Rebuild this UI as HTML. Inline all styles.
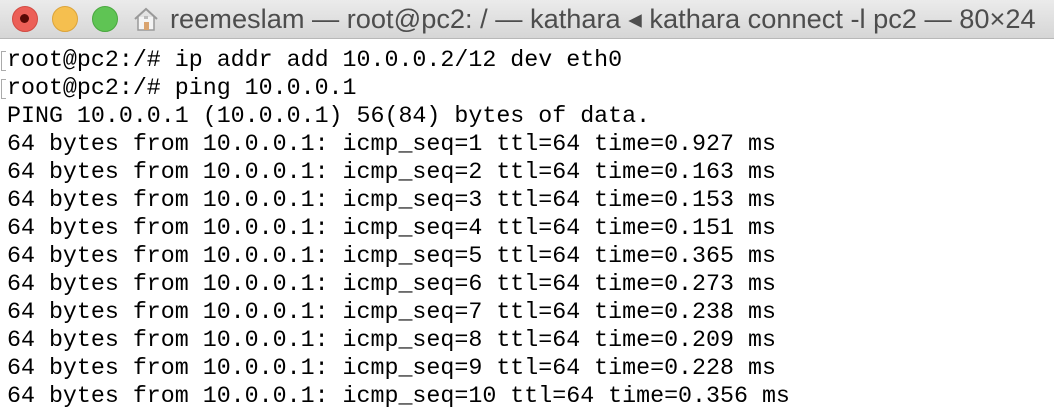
<!DOCTYPE html>
<html><head><style>
body{margin:0;width:1054px;height:410px;overflow:hidden;background:#fff;}
.tb{position:absolute;left:0;top:0;width:1054px;height:38px;background:linear-gradient(#ebebeb,#d6d6d6);border-bottom:1px solid #b8b8b8;}
.dot{position:absolute;top:6px;width:24px;height:24px;border-radius:50%;}
.title{position:absolute;left:170px;top:3px;font:27.2px "Liberation Sans",sans-serif;color:#4d4d4d;white-space:nowrap;}
pre{position:absolute;left:7px;top:46px;margin:0;font:23.3px/28px "Liberation Mono",monospace;color:#000;}
.br{position:absolute;left:1px;width:4px;height:18px;border:1px solid #aaa;border-right:none;}
</style></head><body>
<div class="tb">
<div class="dot" style="left:12px;background:#ec5f57;border:1px solid #d24b43;"></div>
<div style="position:absolute;left:20px;top:14px;width:9px;height:9px;border-radius:50%;background:#5a0a06"></div>
<div class="dot" style="left:52px;background:#f5bf4f;border:1px solid #dca43a;"></div>
<div class="dot" style="left:92px;background:#5fc454;border:1px solid #4aa83f;"></div>
<svg style="position:absolute;left:133px;top:7px" width="26" height="24" viewBox="0 0 26 24"><path d="M2 12 L13 2 L24 12" fill="none" stroke="#999" stroke-width="2"/><path d="M5 10 V23 H21 V10" fill="#f4f4f4" stroke="#999" stroke-width="1.5"/><rect x="11" y="15" width="5" height="8" fill="#d9a36e"/><rect x="11" y="9" width="4" height="3" fill="#bbb"/></svg>
<div class="title">reemeslam — root@pc2: / — kathara ◂ kathara connect -l pc2 — 80×24</div>
</div>
<div class="br" style="top:51px"></div>
<div class="br" style="top:79px"></div>
<pre>root@pc2:/# ip addr add 10.0.0.2/12 dev eth0
root@pc2:/# ping 10.0.0.1
PING 10.0.0.1 (10.0.0.1) 56(84) bytes of data.
64 bytes from 10.0.0.1: icmp_seq=1 ttl=64 time=0.927 ms
64 bytes from 10.0.0.1: icmp_seq=2 ttl=64 time=0.163 ms
64 bytes from 10.0.0.1: icmp_seq=3 ttl=64 time=0.153 ms
64 bytes from 10.0.0.1: icmp_seq=4 ttl=64 time=0.151 ms
64 bytes from 10.0.0.1: icmp_seq=5 ttl=64 time=0.365 ms
64 bytes from 10.0.0.1: icmp_seq=6 ttl=64 time=0.273 ms
64 bytes from 10.0.0.1: icmp_seq=7 ttl=64 time=0.238 ms
64 bytes from 10.0.0.1: icmp_seq=8 ttl=64 time=0.209 ms
64 bytes from 10.0.0.1: icmp_seq=9 ttl=64 time=0.228 ms
64 bytes from 10.0.0.1: icmp_seq=10 ttl=64 time=0.356 ms</pre>
</body></html>
